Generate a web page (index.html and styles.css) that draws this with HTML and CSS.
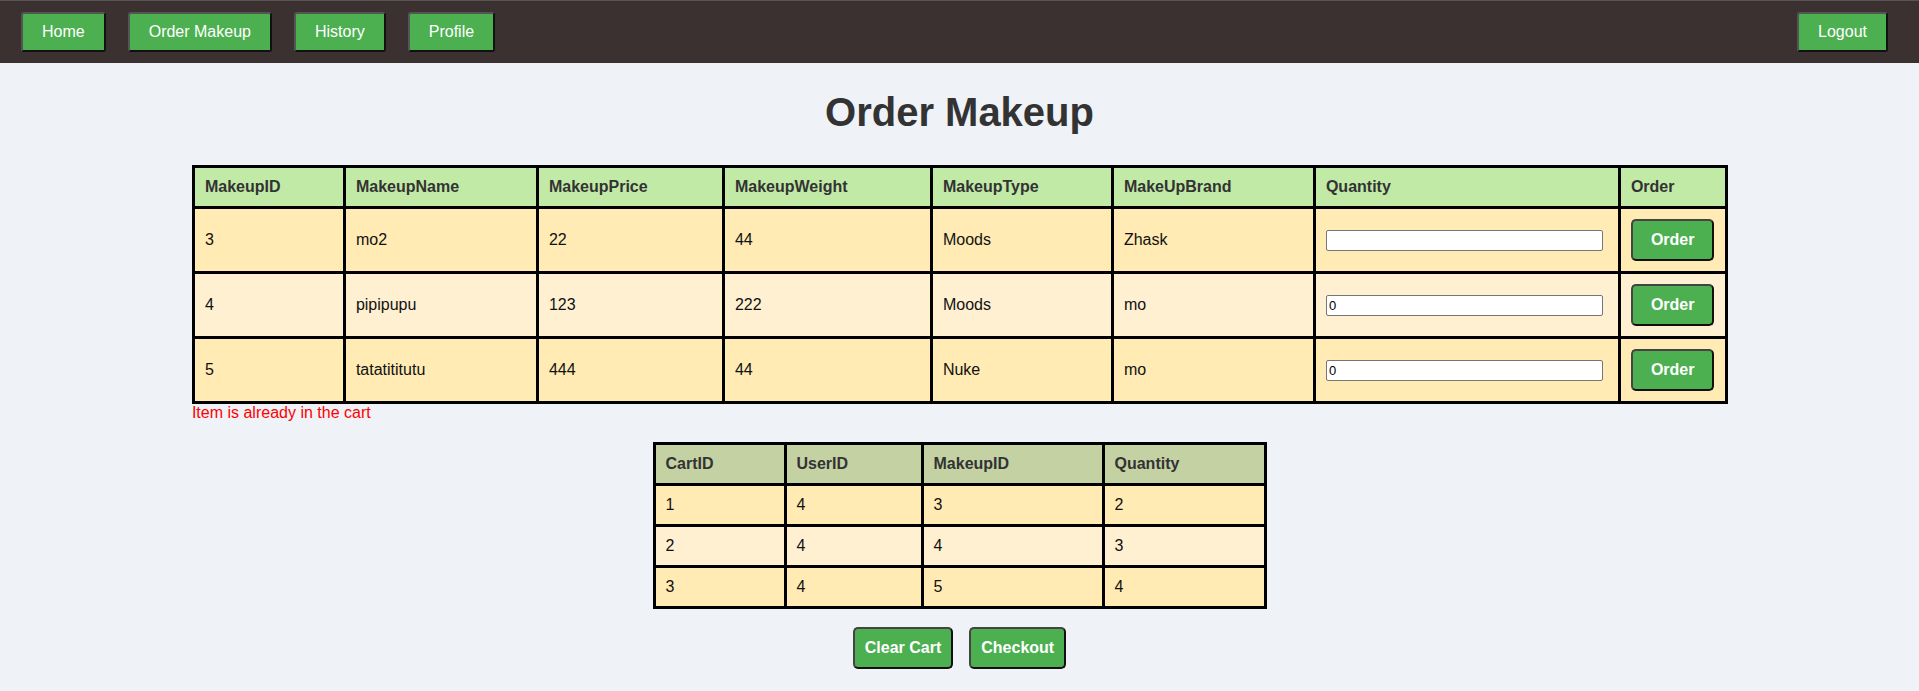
FILE: index.html
```html
<!DOCTYPE html>
<html lang="en">
<head>
<meta charset="utf-8">
<title>Order Makeup</title>
<link rel="stylesheet" href="styles.css">
</head>
<body>
<nav class="topbar">
  <button class="nav-btn">Home</button>
  <button class="nav-btn">Order Makeup</button>
  <button class="nav-btn">History</button>
  <button class="nav-btn">Profile</button>
  <button class="nav-btn logout">Logout</button>
</nav>
<main class="page">
  <h1 class="title">Order Makeup</h1>
  <div class="makeup-wrap">
    <table class="grid makeup">
      <colgroup>
        <col class="c1"><col class="c2"><col class="c3"><col class="c4"><col class="c5"><col class="c6"><col class="c7"><col class="c8">
      </colgroup>
      <thead>
        <tr><th>MakeupID</th><th>MakeupName</th><th>MakeupPrice</th><th>MakeupWeight</th><th>MakeupType</th><th>MakeUpBrand</th><th>Quantity</th><th>Order</th></tr>
      </thead>
      <tbody>
        <tr><td>3</td><td>mo2</td><td>22</td><td>44</td><td>Moods</td><td>Zhask</td><td><input class="qty" type="text" value=""></td><td><button class="act-btn">Order</button></td></tr>
        <tr><td>4</td><td>pipipupu</td><td>123</td><td>222</td><td>Moods</td><td>mo</td><td><input class="qty" type="text" value="0"></td><td><button class="act-btn">Order</button></td></tr>
        <tr><td>5</td><td>tatatititutu</td><td>444</td><td>44</td><td>Nuke</td><td>mo</td><td><input class="qty" type="text" value="0"></td><td><button class="act-btn">Order</button></td></tr>
      </tbody>
    </table>
    <p class="error">Item is already in the cart</p>
  </div>
  <table class="grid cart">
    <colgroup>
      <col class="k1"><col class="k2"><col class="k3"><col class="k4">
    </colgroup>
    <thead>
      <tr><th>CartID</th><th>UserID</th><th>MakeupID</th><th>Quantity</th></tr>
    </thead>
    <tbody>
      <tr><td>1</td><td>4</td><td>3</td><td>2</td></tr>
      <tr><td>2</td><td>4</td><td>4</td><td>3</td></tr>
      <tr><td>3</td><td>4</td><td>5</td><td>4</td></tr>
    </tbody>
  </table>
  <div class="cart-actions">
    <button class="act-btn wide">Clear Cart</button>
    <button class="act-btn wide">Checkout</button>
  </div>
</main>
</body>
</html>
```
FILE: styles.css
```css
* { box-sizing: border-box; }
html, body {
  margin: 0;
  padding: 0;
  background: #eff2f7;
  font-family: "Liberation Sans", Arial, sans-serif;
  font-size: 16px;
  color: #111;
}

.topbar {
  display: flex;
  align-items: center;
  gap: 22px;
  height: 63px;
  padding: 0 31px 0 21px;
  background: #3b3131;
  border-top: 1px solid #5a5555;
}
.nav-btn {
  font-family: "Liberation Sans", Arial, sans-serif;
  font-size: 16px;
  line-height: 18px;
  color: #fff;
  background: #4caf50;
  padding: 9px 19px;
  border: 2px solid;
  border-color: #555 #111 #111 #555;
  border-radius: 3px;
  cursor: pointer;
}
.nav-btn.logout { margin-left: auto; }

.page {
  display: flex;
  flex-direction: column;
  align-items: center;
}
.title {
  margin: 26px 0 30px;
  font-size: 40px;
  line-height: 46px;
  font-weight: bold;
  color: #333;
}

.makeup-wrap { width: 80%; }

.grid {
  border-collapse: collapse;
  table-layout: fixed;
}
.grid th, .grid td {
  border: 3px solid #000;
  padding: 10px;
  text-align: left;
  vertical-align: middle;
  line-height: 18px;
  font-size: 16px;
}
.grid th { font-weight: bold; color: #333; }
.grid td { color: #111; }

.makeup { width: calc(100% - 3px); }
.makeup th { background: #c1eaa6; }
.makeup tbody tr:nth-child(odd) td { background: #ffebb3; }
.makeup tbody tr:nth-child(even) td { background: #fff0d2; }
.c1 { width: 151px; } .c2 { width: 193px; } .c3 { width: 186px; } .c4 { width: 208px; }
.c5 { width: 181px; } .c6 { width: 202px; } .c7 { width: 305px; } .c8 { width: 107px; }

.qty {
  display: block;
  width: 277px;
  height: 21px;
  padding: 1px 2px;
  font-family: "Liberation Sans", Arial, sans-serif;
  font-size: 13px;
  color: #000;
  background: #fff;
  border: 1px solid #767676;
  border-radius: 2px;
}

.act-btn {
  font-family: "Liberation Sans", Arial, sans-serif;
  font-size: 16px;
  line-height: 18px;
  font-weight: bold;
  color: #fff;
  background: #4caf50;
  padding: 10px 18px;
  border: 2px solid;
  border-color: #444 #111 #111 #444;
  border-radius: 5px;
  cursor: pointer;
}
.act-btn.wide { padding: 10px; }

.error {
  margin: 0 0 20px;
  color: #ff0000;
  font-size: 16px;
  line-height: 18px;
}

.cart { width: 611px; }
.cart th { background: #c4d1a3; }
.cart tbody tr:nth-child(odd) td { background: #ffebb3; }
.cart tbody tr:nth-child(even) td { background: #fff0d2; }
.k1 { width: 131px; } .k2 { width: 137px; } .k3 { width: 181px; } .k4 { width: 162px; }

.cart-actions {
  display: flex;
  gap: 16px;
  margin-top: 18px;
}
```
